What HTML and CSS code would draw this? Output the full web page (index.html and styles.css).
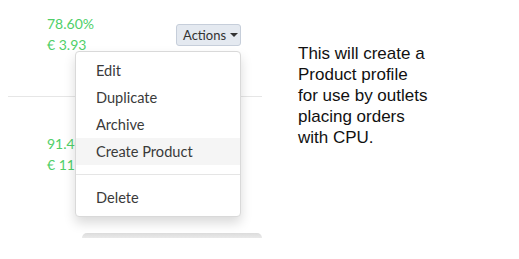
FILE: index.html
```html
<!DOCTYPE html>
<html>
<head>
<meta charset="utf-8">
<link rel="stylesheet" href="styles.css">
</head>
<body>
<div class="page">
  <div class="list">
    <div class="row row-first">
      <div class="stats">
        <div class="stat">78.60%</div>
        <div class="stat">€ 3.93</div>
      </div>
      <div class="actions">
        <button class="btn">Actions <span class="caret"></span></button>
        <ul class="menu">
          <li class="item">Edit</li>
          <li class="item">Duplicate</li>
          <li class="item">Archive</li>
          <li class="item active">Create Product</li>
          <li class="divider"></li>
          <li class="item">Delete</li>
        </ul>
      </div>
    </div>
    <div class="row row-second">
      <div class="stats">
        <div class="stat">91.40%</div>
        <div class="stat">€ 11.20</div>
      </div>
    </div>
    <div class="footer-box"></div>
  </div>
  <div class="note">This will create a<br>Product profile<br>for use by outlets<br>placing orders<br>with CPU.</div>
</div>
</body>
</html>
```

FILE: styles.css
```css
html, body {
  margin: 0;
  padding: 0;
  background: #fff;
}
.page {
  display: flex;
  width: 519px;
  height: 259px;
  overflow: hidden;
}
.list {
  width: 254px;
  margin-left: 8px;
  display: flex;
  flex-direction: column;
  font-family: Lato, "Open Sans", sans-serif;
}
.row {
  display: flex;
  justify-content: space-between;
  align-items: flex-start;
  border-bottom: 1px solid #e6e6e6;
}
.row-first {
  padding-top: 13px;
  padding-left: 39px;
  padding-right: 21px;
  box-sizing: border-box;
  height: 97px;
}
.row-second {
  border-bottom: none;
  padding-top: 36px;
  padding-left: 39px;
  height: 136px;
  box-sizing: border-box;
}
.stat {
  color: #4fcf68;
  font-size: 14px;
  line-height: 21px;
}
.actions {
  position: relative;
  margin-top: 11px;
}
.btn {
  display: flex;
  align-items: center;
  gap: 4px;
  height: 22px;
  width: 65px;
  box-sizing: border-box;
  padding: 0 6px;
  background: #e4e9f0;
  border: 1px solid #c6ceda;
  border-radius: 3px;
  font-family: Lato, sans-serif;
  font-size: 13px;
  color: #333;
}
.caret {
  width: 0;
  height: 0;
  border-left: 4px solid transparent;
  border-right: 4px solid transparent;
  border-top: 4px solid #333;
}
.menu {
  position: absolute;
  right: 0;
  top: 27px;
  width: 166px;
  box-sizing: border-box;
  margin: 0;
  padding: 5px 0;
  list-style: none;
  background: #fff;
  border: 1px solid #d9d9d9;
  border-radius: 4px;
  box-shadow: 0 6px 12px rgba(0,0,0,0.15);
  z-index: 2;
}
.item {
  height: 27px;
  line-height: 27px;
  padding: 0 20px;
  font-size: 14.6px;
  color: #3a3a3a;
}
.item.active {
  background: #f5f5f5;
}
.divider {
  height: 1px;
  margin: 9px 0;
  background: #e5e5e5;
}
.footer-box {
  margin-left: 74px;
  height: 5px;
  background: linear-gradient(#dcdcdc, #e9e9e9);
  border-radius: 5px 5px 0 0;
}
.note {
  margin-left: 36px;
  margin-top: 43px;
  font-family: "Liberation Sans", Arial, sans-serif;
  font-size: 17px;
  line-height: 21px;
  color: #111;
}
```
